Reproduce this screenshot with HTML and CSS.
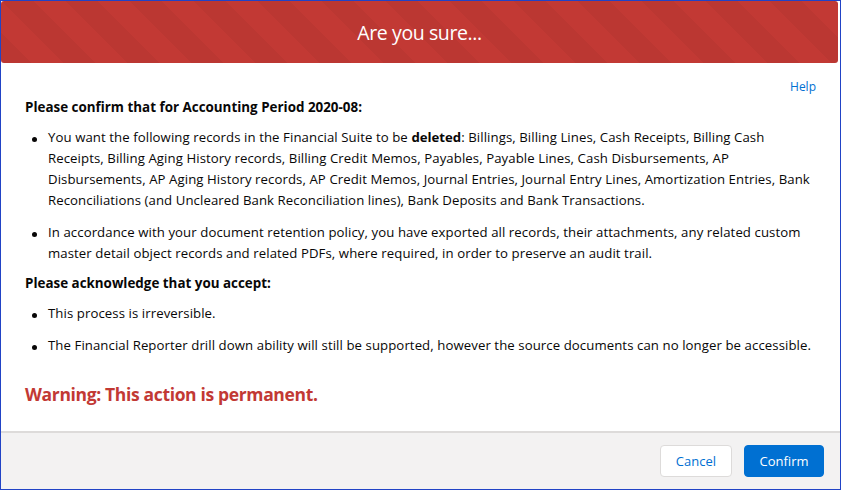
FILE: index.html
```html
<!DOCTYPE html>
<html lang="en">
<head>
<meta charset="utf-8">
<title>Are you sure...</title>
<link rel="stylesheet" href="styles.css">
</head>
<body>
<div class="frame">
  <header class="modal-header">
    <h2 class="modal-title">Are you sure...</h2>
  </header>
  <main class="modal-body">
    <div class="help-row"><a class="help-link" href="#">Help</a></div>
    <p class="section-heading">Please confirm that for Accounting Period 2020-08:</p>
    <ul class="bullets">
      <li><p class="item-text">You want the following records in the Financial Suite to be <b>deleted</b>: Billings, Billing Lines, Cash Receipts, Billing Cash Receipts, Billing Aging History records, Billing Credit Memos, Payables, Payable Lines, Cash Disbursements, AP Disbursements, AP Aging History records, AP Credit Memos, Journal Entries, Journal Entry Lines, Amortization Entries, Bank Reconciliations (and Uncleared Bank Reconciliation lines), Bank Deposits and Bank Transactions.</p></li>
      <li><p class="item-text">In accordance with your document retention policy, you have exported all records, their attachments, any related custom master detail object records and related PDFs, where required, in order to preserve an audit trail.</p></li>
    </ul>
    <p class="section-heading">Please acknowledge that you accept:</p>
    <ul class="bullets">
      <li><p class="item-text">This process is irreversible.</p></li>
      <li><p class="item-text">The Financial Reporter drill down ability will still be supported, however the source documents can no longer be accessible.</p></li>
    </ul>
    <p class="warning">Warning: This action is permanent.</p>
  </main>
  <footer class="modal-footer">
    <button class="btn btn-neutral" type="button">Cancel</button>
    <button class="btn btn-brand" type="button">Confirm</button>
  </footer>
</div>
</body>
</html>
```
FILE: styles.css
```css
html, body {
  margin: 0;
  padding: 0;
  height: 100%;
}

body {
  font-family: "Open Sans", "Noto Sans", sans-serif;
  color: #080707;
  background: #ffffff;
}

.frame {
  box-sizing: border-box;
  width: 841px;
  height: 490px;
  border: 1px solid #2143c6;
  display: flex;
  flex-direction: column;
  background: #ffffff;
  overflow: hidden;
}

.modal-header {
  flex: none;
  height: 62px;
  margin-right: 2px;
  border-radius: 3px;
  background-color: #c23934;
  background-image: linear-gradient(45deg,
    rgba(0, 0, 0, 0.035) 25%, transparent 25%,
    transparent 50%, rgba(0, 0, 0, 0.035) 50%,
    rgba(0, 0, 0, 0.035) 75%, transparent 75%, transparent);
  background-size: 64px 64px;
  display: flex;
  align-items: center;
  justify-content: center;
}

.modal-title {
  margin: 0;
  padding-top: 2px;
  font-size: 19.5px;
  font-weight: 400;
  letter-spacing: -0.4px;
  color: #ffffff;
  line-height: 26px;
}

.modal-body {
  flex: 1;
  padding: 14px 24px 0 24px;
  font-size: 13.2px;
  letter-spacing: 0.08px;
  line-height: 21px;
}

.help-row {
  display: flex;
  justify-content: flex-end;
  line-height: 20px;
}

.help-link {
  font-size: 12px;
  letter-spacing: 0;
  color: #0070d2;
  text-decoration: none;
}

.section-heading {
  margin: 0;
  font-size: 13.4px;
  font-weight: 700;
  letter-spacing: 0;
}

.bullets {
  list-style: none;
  margin: 9px 0;
  padding: 0 0 0 23px;
}

.bullets li {
  display: flex;
  align-items: flex-start;
}

.bullets li + li {
  margin-top: 11px;
}

.bullets li::before {
  content: "";
  flex: none;
  width: 5px;
  height: 5px;
  border-radius: 50%;
  background: #080707;
  margin: 9.5px 11.5px 0 -16.5px;
}

.item-text {
  margin: 0;
  flex: 1;
  min-width: 0;
}

.item-text b {
  font-weight: 700;
  letter-spacing: 0;
}

.warning {
  margin: 26px 0 0 0;
  font-size: 17.5px;
  font-weight: 700;
  letter-spacing: -0.35px;
  line-height: 24px;
  color: #c23934;
}

.modal-footer {
  flex: none;
  border-top: 2px solid #dddbda;
  background: #f3f2f2;
  padding: 12px 16px;
  display: flex;
  justify-content: flex-end;
  gap: 12px;
}

.btn {
  height: 32px;
  padding: 0 15px;
  border-radius: 4px;
  font-family: "Open Sans", "Noto Sans", sans-serif;
  font-size: 13px;
  line-height: 30px;
  cursor: pointer;
}

.btn-neutral {
  background: #ffffff;
  border: 1px solid #dddbda;
  color: #0070d2;
}

.btn-brand {
  padding: 0 14.5px;
  background: #0070d2;
  border: 1px solid #0070d2;
  color: #ffffff;
}
```
